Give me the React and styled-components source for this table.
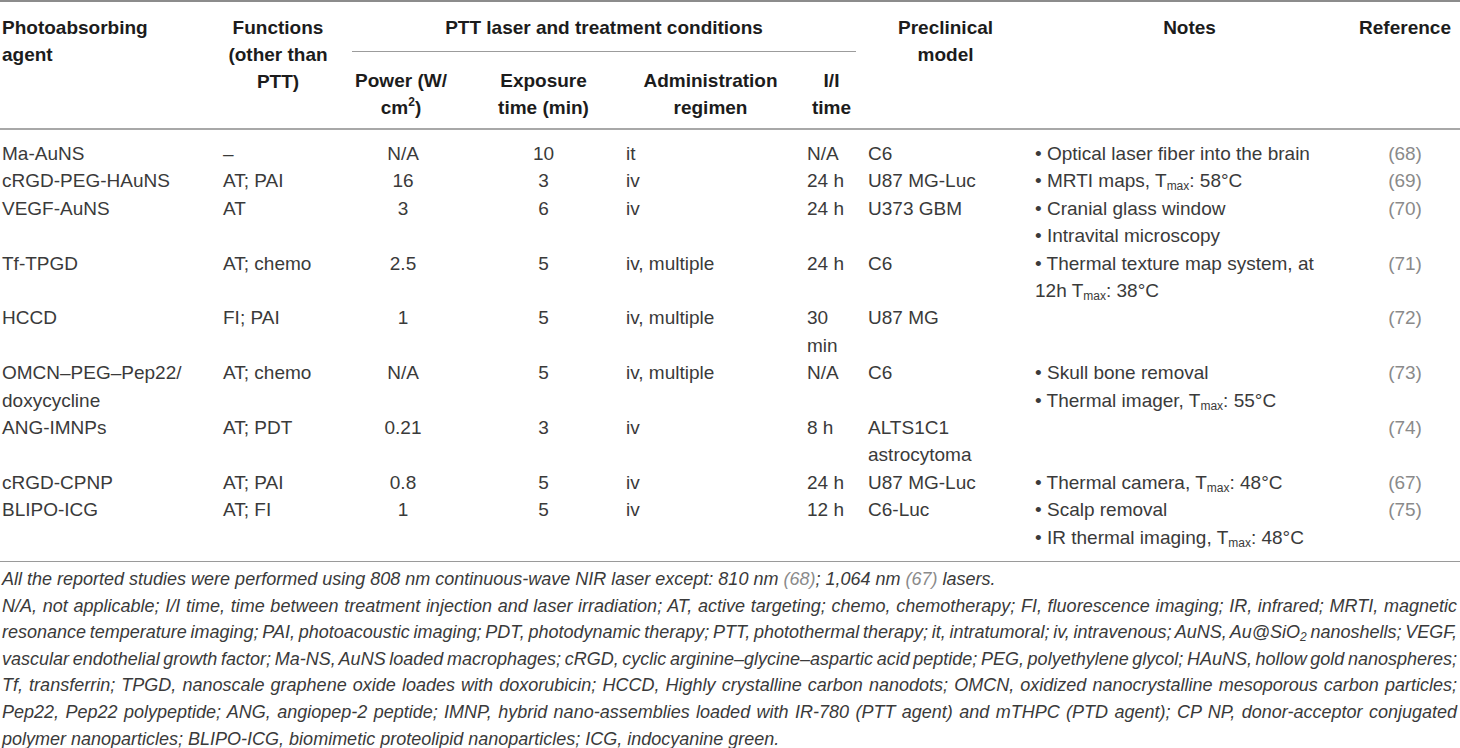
import React from "react";
import styled, { createGlobalStyle } from "styled-components";

const GlobalStyle = createGlobalStyle`
  html, body {
    margin: 0;
    padding: 0;
    background: #ffffff;
  }
  body {
    font-family: "Liberation Sans", Arial, Helvetica, sans-serif;
    color: #3a3a3a;
  }
`;

const Page = styled.div`
  width: 1460px;
  height: 748px;
  overflow: hidden;
`;

const Table = styled.table`
  width: 1460px;
  border-collapse: collapse;
  table-layout: fixed;
  border-top: 2px solid #8c8c8c;
  border-bottom: 1px solid #9a9a9a;

  thead {
    border-bottom: 2px solid #a8a8a8;
  }
`;

const Th = styled.th`
  font-size: 19px;
  line-height: 27px;
  font-weight: 700;
  color: #1c1c1c;
  vertical-align: top;
  text-align: ${(p) => p.$align || "center"};
  padding: ${(p) => (p.$sub ? "15px 6px 7px" : "12px 6px 0")};
  &:first-child {
    padding-left: 2px;
  }
`;

const GroupTitle = styled.div`
  margin-left: 7px;
  padding-bottom: 10px;
  border-bottom: 1px solid #9c9c9c;
`;

const Td = styled.td`
  font-size: 19px;
  line-height: 27.4px;
  color: #3a3a3a;
  vertical-align: top;
  text-align: ${(p) => p.$align || "left"};
  padding: 0 6px;
  &:first-child {
    padding-left: 2px;
  }
  tr:first-child > & {
    padding-top: 10px;
  }
  tr:last-child > & {
    padding-bottom: 10px;
  }
`;

const Ref = styled.span`
  color: #8a8a8a;
`;

const Note = styled.div`
  white-space: normal;
`;

const Sub = styled.sub`
  font-size: 12px;
  line-height: 0;
  vertical-align: -3px;
`;

const Sup = styled.sup`
  font-size: 12px;
  line-height: 0;
  vertical-align: 8px;
`;

const Footnotes = styled.div`
  padding: 4px 3px 0 2px;
  font-size: 18px;
  line-height: 26.6px;
  font-style: italic;
  color: #3a3a3a;
`;

const Line = styled.div`
  white-space: nowrap;
  text-align: ${(p) => (p.$justify ? "justify" : "left")};
  text-align-last: ${(p) => (p.$justify ? "justify" : "left")};
  word-spacing: ${(p) => (p.$tight ? "-3px" : "normal")};
`;

const Tmax = () => (
  <>
    T<Sub>max</Sub>
  </>
);

const rows = [
  {
    agent: "Ma-AuNS",
    fn: "–",
    power: "N/A",
    time: "10",
    admin: "it",
    ii: "N/A",
    model: "C6",
    notes: [<>• Optical laser fiber into the brain</>],
    ref: "(68)",
  },
  {
    agent: "cRGD-PEG-HAuNS",
    fn: "AT; PAI",
    power: "16",
    time: "3",
    admin: "iv",
    ii: "24 h",
    model: "U87 MG-Luc",
    notes: [<>• MRTI maps, <Tmax />: 58°C</>],
    ref: "(69)",
  },
  {
    agent: "VEGF-AuNS",
    fn: "AT",
    power: "3",
    time: "6",
    admin: "iv",
    ii: "24 h",
    model: "U373 GBM",
    notes: [<>• Cranial glass window</>, <>• Intravital microscopy</>],
    ref: "(70)",
  },
  {
    agent: "Tf-TPGD",
    fn: "AT; chemo",
    power: "2.5",
    time: "5",
    admin: "iv, multiple",
    ii: "24 h",
    model: "C6",
    notes: [<>• Thermal texture map system, at 12h <Tmax />: 38°C</>],
    ref: "(71)",
  },
  {
    agent: "HCCD",
    fn: "FI; PAI",
    power: "1",
    time: "5",
    admin: "iv, multiple",
    ii: "30 min",
    model: "U87 MG",
    notes: [],
    ref: "(72)",
  },
  {
    agent: <>OMCN–PEG–Pep22/<br />doxycycline</>,
    fn: "AT; chemo",
    power: "N/A",
    time: "5",
    admin: "iv, multiple",
    ii: "N/A",
    model: "C6",
    notes: [<>• Skull bone removal</>, <>• Thermal imager, <Tmax />: 55°C</>],
    ref: "(73)",
  },
  {
    agent: "ANG-IMNPs",
    fn: "AT; PDT",
    power: "0.21",
    time: "3",
    admin: "iv",
    ii: "8 h",
    model: "ALTS1C1 astrocytoma",
    notes: [],
    ref: "(74)",
  },
  {
    agent: "cRGD-CPNP",
    fn: "AT; PAI",
    power: "0.8",
    time: "5",
    admin: "iv",
    ii: "24 h",
    model: "U87 MG-Luc",
    notes: [<>• Thermal camera, <Tmax />: 48°C</>],
    ref: "(67)",
  },
  {
    agent: "BLIPO-ICG",
    fn: "AT; FI",
    power: "1",
    time: "5",
    admin: "iv",
    ii: "12 h",
    model: "C6-Luc",
    notes: [<>• Scalp removal</>, <>• IR thermal imaging, <Tmax />: 48°C</>],
    ref: "(75)",
  },
];

export default function App() {
  return (
    <Page>
      <GlobalStyle />
      <Table>
        <colgroup>
          <col style={{ width: 217 }} />
          <col style={{ width: 122 }} />
          <col style={{ width: 128 }} />
          <col style={{ width: 153 }} />
          <col style={{ width: 181 }} />
          <col style={{ width: 61 }} />
          <col style={{ width: 167 }} />
          <col style={{ width: 321 }} />
          <col style={{ width: 110 }} />
        </colgroup>
        <thead>
          <tr>
            <Th rowSpan={2} $align="left">Photoabsorbing<br />agent</Th>
            <Th rowSpan={2}>Functions<br />(other than<br />PTT)</Th>
            <Th colSpan={4}>
              <GroupTitle>PTT laser and treatment conditions</GroupTitle>
            </Th>
            <Th rowSpan={2}>Preclinical<br />model</Th>
            <Th rowSpan={2}>Notes</Th>
            <Th rowSpan={2}>Reference</Th>
          </tr>
          <tr>
            <Th $sub>Power (W/<br />cm<Sup>2</Sup>)</Th>
            <Th $sub>Exposure<br />time (min)</Th>
            <Th $sub>Administration<br />regimen</Th>
            <Th $sub>I/I<br />time</Th>
          </tr>
        </thead>
        <tbody>
          {rows.map((r, i) => (
            <tr key={i}>
              <Td>{r.agent}</Td>
              <Td>{r.fn}</Td>
              <Td $align="center">{r.power}</Td>
              <Td $align="center">{r.time}</Td>
              <Td>{r.admin}</Td>
              <Td>{r.ii}</Td>
              <Td>{r.model}</Td>
              <Td>
                {r.notes.map((n, j) => (
                  <Note key={j}>{n}</Note>
                ))}
              </Td>
              <Td $align="center">
                <Ref>{r.ref}</Ref>
              </Td>
            </tr>
          ))}
        </tbody>
      </Table>
      <Footnotes>
        <Line>
          All the reported studies were performed using 808 nm continuous-wave NIR laser except: 810 nm <Ref>(68)</Ref>; 1,064 nm <Ref>(67)</Ref> lasers.
        </Line>
        <Line $justify>
          N/A, not applicable; I/I time, time between treatment injection and laser irradiation; AT, active targeting; chemo, chemotherapy; FI, fluorescence imaging; IR, infrared; MRTI, magnetic
        </Line>
        <Line $justify $tight>
          resonance temperature imaging; PAI, photoacoustic imaging; PDT, photodynamic therapy; PTT, photothermal therapy; it, intratumoral; iv, intravenous; AuNS, Au@SiO<Sub>2</Sub> nanoshells; VEGF,
        </Line>
        <Line $justify $tight>
          vascular endothelial growth factor; Ma-NS, AuNS loaded macrophages; cRGD, cyclic arginine–glycine–aspartic acid peptide; PEG, polyethylene glycol; HAuNS, hollow gold nanospheres;
        </Line>
        <Line $justify>
          Tf, transferrin; TPGD, nanoscale graphene oxide loades with doxorubicin; HCCD, Highly crystalline carbon nanodots; OMCN, oxidized nanocrystalline mesoporous carbon particles;
        </Line>
        <Line $justify>
          Pep22, Pep22 polypeptide; ANG, angiopep-2 peptide; IMNP, hybrid nano-assemblies loaded with IR-780 (PTT agent) and mTHPC (PTD agent); CP NP, donor-acceptor conjugated
        </Line>
        <Line>
          polymer nanoparticles; BLIPO-ICG, biomimetic proteolipid nanoparticles; ICG, indocyanine green.
        </Line>
      </Footnotes>
    </Page>
  );
}
